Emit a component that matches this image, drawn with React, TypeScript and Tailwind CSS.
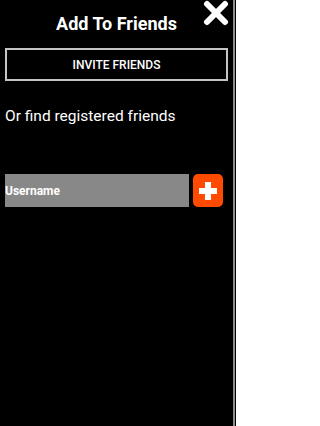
import { X } from 'lucide-react';

function PlusIcon() {
  return (
    <svg width="18" height="18" viewBox="0 0 18 18" aria-hidden="true">
      <rect x="6" y="0" width="6" height="18" fill="#fff" />
      <rect x="0" y="6" width="18" height="6" fill="#fff" />
    </svg>
  );
}

export default function App() {
  return (
    <div className="flex h-[426px] w-[236px] bg-black font-['Roboto',sans-serif] text-white">
      <div className="flex flex-1 flex-col px-[5px]">
        <div className="grid h-[48px] grid-cols-[1fr_auto_1fr]">
          <div />
          <h1 className="self-center text-[18px] font-bold leading-[22px]">Add To Friends</h1>
          <button className="h-[24px] w-[24px] self-start justify-self-end" aria-label="close">
            <X size={36} strokeWidth={4} className="-ml-[6px] -mt-[5px]" />
          </button>
        </div>

        <button className="h-[33px] w-full border-2 border-[#c4c4c4] text-[12px] font-medium leading-none">
          INVITE FRIENDS
        </button>

        <p className="mt-[25px] text-[15.5px] leading-[20px]">Or find registered friends</p>

        <div className="mt-[48px] flex gap-[4px] pr-[5px]">
          <div className="flex h-[33px] flex-1 items-center bg-[#888888] text-[12px] font-bold">
            Username
          </div>
          <button
            className="flex h-[33px] w-[30px] items-center justify-center rounded-[5px] bg-[#ff4a00]"
            aria-label="add"
          >
            <PlusIcon />
          </button>
        </div>
      </div>
      <div className="w-[3px] border-r border-black bg-[#8c8c8c]" />
    </div>
  );
}
